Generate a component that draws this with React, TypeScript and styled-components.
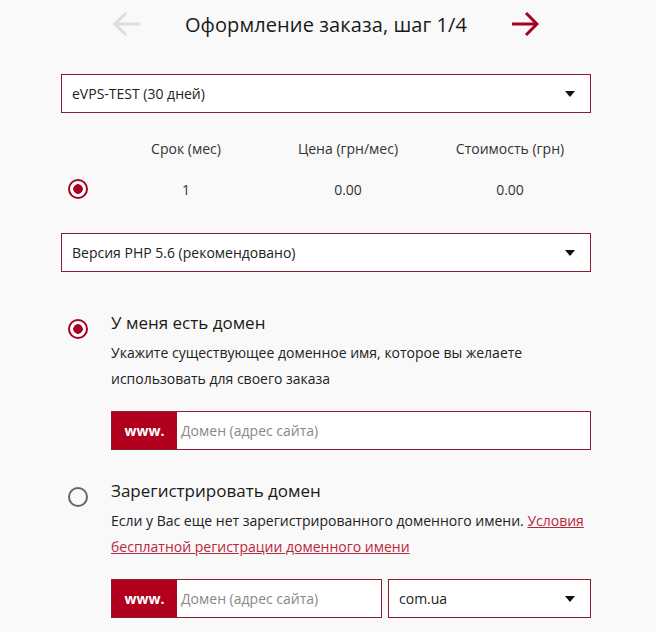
import React from 'react';
import styled, { createGlobalStyle } from 'styled-components';

const GlobalStyle = createGlobalStyle`
  html, body {
    margin: 0;
    padding: 0;
    background: #f9f9f9;
  }
  body {
    font-family: "Open Sans", "Liberation Sans", sans-serif;
    color: #222;
  }
`;

const RED = '#a8001f';
const BORDER = '#8a1c2c';

const Arrow = ({ dir, color }: { dir: 'left' | 'right'; color: string }) => (
  <svg width="28" height="26" viewBox="0 0 28 26" fill="none">
    {dir === 'right' ? (
      <path d="M1 13H26M15 2L26 13L15 24" stroke={color} strokeWidth="3" />
    ) : (
      <path d="M27 13H2M13 2L2 13L13 24" stroke={color} strokeWidth="3" />
    )}
  </svg>
);

const Caret = () => (
  <svg width="10" height="6" viewBox="0 0 10 6">
    <path d="M0 0H10L5 6Z" fill="#111" />
  </svg>
);

const App = () => {
  return (
    <>
      <GlobalStyle />
      <Page>
        <Header>
          <Arrow dir="left" color="#dedede" />
          <Title>Оформление заказа, шаг 1/4</Title>
          <Arrow dir="right" color={RED} />
        </Header>

        <Select>
          <span>eVPS-TEST (30 дней)</span>
          <Caret />
        </Select>

        <PriceTable>
          <span />
          <HeadCell>Срок (мес)</HeadCell>
          <HeadCell>Цена (грн/мес)</HeadCell>
          <HeadCell>Стоимость (грн)</HeadCell>
          <RadioCell>
            <Radio checked />
          </RadioCell>
          <ValueCell>1</ValueCell>
          <ValueCell>0.00</ValueCell>
          <ValueCell>0.00</ValueCell>
        </PriceTable>

        <Select $gap={25}>
          <span>Версия PHP 5.6 (рекомендовано)</span>
          <Caret />
        </Select>

        <Option>
          <RadioCol>
            <Radio checked />
          </RadioCol>
          <OptionBody>
            <OptionTitle>У меня есть домен</OptionTitle>
            <OptionText>
              Укажите существующее доменное имя, которое вы желаете использовать для своего заказа
            </OptionText>
            <InputRow>
              <DomainInput>
                <Prefix>www.</Prefix>
                <Placeholder>Домен (адрес сайта)</Placeholder>
              </DomainInput>
            </InputRow>
          </OptionBody>
        </Option>

        <Option>
          <RadioCol>
            <Radio />
          </RadioCol>
          <OptionBody>
            <OptionTitle>Зарегистрировать домен</OptionTitle>
            <OptionText>
              Если у Вас еще нет зарегистрированного доменного имени.{' '}
              <Link href="#">Условия бесплатной регистрации доменного имени</Link>
            </OptionText>
            <InputRow>
              <DomainInput>
                <Prefix>www.</Prefix>
                <Placeholder>Домен (адрес сайта)</Placeholder>
              </DomainInput>
              <ZoneSelect>
                <span>com.ua</span>
                <Caret />
              </ZoneSelect>
            </InputRow>
          </OptionBody>
        </Option>
      </Page>
    </>
  );
};

const Page = styled.div`
  width: 530px;
  padding: 0 0 0 61px;
  box-sizing: content-box;
`;

const Header = styled.div`
  display: flex;
  align-items: center;
  justify-content: space-between;
  height: 48px;
  padding: 0 52px 0 52px;
`;

const Title = styled.div`
  font-size: 20px;
  color: #1a1a1a;
  letter-spacing: 0.1px;
`;

const Select = styled.div<{ $gap?: number }>`
  display: flex;
  align-items: center;
  justify-content: space-between;
  height: 39px;
  box-sizing: border-box;
  margin-top: ${({ $gap }) => $gap ?? 26}px;
  padding: 0 15px 0 10px;
  border: 1px solid ${BORDER};
  background: #fff;
  font-size: 14px;
  color: #222;
`;

const PriceTable = styled.div`
  display: grid;
  grid-template-columns: 44px 162px 162px 162px;
  grid-template-rows: 40px 40px;
  align-items: center;
  margin-top: 15px;
`;

const HeadCell = styled.div`
  text-align: center;
  font-size: 14px;
  color: #333;
`;

const ValueCell = styled(HeadCell)`
  padding-top: 2px;
`;

const RadioCell = styled.div`
  display: flex;
  align-items: center;
  padding: 2px 0 0 7px;
`;

const Radio = styled.span<{ checked?: boolean }>`
  display: inline-block;
  box-sizing: border-box;
  width: 20px;
  height: 20px;
  border-radius: 50%;
  border: 2px solid ${({ checked }) => (checked ? RED : '#666')};
  background: ${({ checked }) =>
    checked ? `radial-gradient(circle, ${RED} 0 4.5px, #fff 5px)` : 'transparent'};
`;

const Option = styled.div`
  display: flex;
  margin-top: 39px;

  & + & {
    margin-top: 29px;
  }
`;

const RadioCol = styled.div`
  width: 50px;
  padding: 8px 0 0 7px;
  box-sizing: border-box;
`;

const OptionBody = styled.div`
  flex: 1;
`;

const OptionTitle = styled.div`
  font-size: 17px;
  color: #1a1a1a;
  line-height: 24px;
`;

const OptionText = styled.div`
  margin-top: 5px;
  font-size: 14px;
  line-height: 26px;
  color: #222;
`;

const Link = styled.a`
  color: #b7283e;
  text-decoration: underline;
`;

const InputRow = styled.div`
  display: flex;
  gap: 6px;
  margin-top: 19px;
`;

const DomainInput = styled.div`
  flex: 1;
  display: flex;
  height: 39px;
  box-sizing: border-box;
  border: 1px solid ${BORDER};
  background: #fff;
`;

const Prefix = styled.div`
  width: 65px;
  display: flex;
  align-items: center;
  justify-content: center;
  background: #b0001e;
  color: #fff;
  font-weight: 700;
  font-size: 14px;
`;

const Placeholder = styled.div`
  display: flex;
  align-items: center;
  padding-left: 4px;
  font-size: 14px;
  color: #888;
`;

const ZoneSelect = styled.div`
  width: 203px;
  height: 39px;
  box-sizing: border-box;
  display: flex;
  align-items: center;
  justify-content: space-between;
  padding: 0 15px 0 10px;
  border: 1px solid ${BORDER};
  background: #fff;
  font-size: 14px;
  color: #222;
`;

export default App;
